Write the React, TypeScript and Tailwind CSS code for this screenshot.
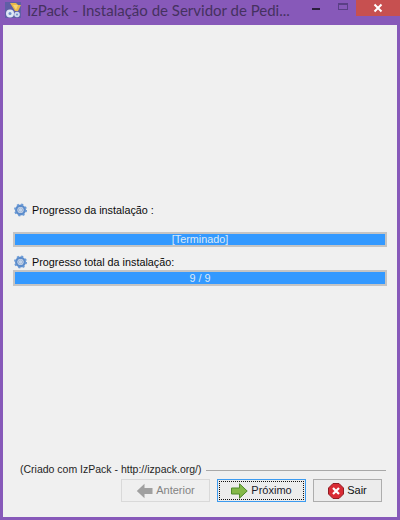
import React from 'react';

const Gear: React.FC = () => (
  <svg width="13" height="14" viewBox="0 0 14 14" className="shrink-0">
    <circle cx="7" cy="7" r="4.6" fill="none" stroke="#5c8ccb" strokeWidth="2.6" />
    <circle cx="7" cy="7" r="6.1" fill="none" stroke="#6a9ad6" strokeWidth="1.8" strokeDasharray="2.2 2.6" />
    <circle cx="7" cy="7" r="2.4" fill="#c3d4ea" stroke="#8aa6d0" strokeWidth="0.8" />
  </svg>
);

const AppIcon: React.FC = () => (
  <svg width="16" height="16" viewBox="0 0 16 16" className="shrink-0">
    <rect width="16" height="16" fill="#5f5ea6" />
    <path d="M5 1l6 0 2 2 3 0-3 6-3 0z" fill="#e8b84a" />
    <path d="M8 3l5 0-2 5z" fill="#f6d676" />
    <circle cx="5" cy="11.5" r="4" fill="#dfe8f5" />
    <circle cx="5" cy="11.5" r="1.5" fill="#6f8fc8" />
    <circle cx="12" cy="12.5" r="2.8" fill="#cfdcf0" />
    <circle cx="12" cy="12.5" r="1" fill="#6f8fc8" />
  </svg>
);

const ProgressBar: React.FC<{ label: string; h: string }> = ({ label, h }) => (
  <div className={`mx-[13px] ${h} border-2 border-[#c4c4c4] bg-[#3399ff] flex items-center justify-center text-[10.8px] text-[#dce9f7] leading-none`}>
    {label}
  </div>
);

const App: React.FC = () => {
  return (
    <div className="w-[400px] h-[520px] bg-[#8759b9] flex flex-col overflow-hidden font-['Liberation_Sans',sans-serif]">
      {/* Title bar */}
      <div className="h-[25px] flex items-start shrink-0">
        <div className="ml-[5px] mt-[2px]">
          <AppIcon />
        </div>
        <div className="ml-[6px] w-[279px] text-[15px] font-normal leading-[21px] text-[#453160] font-['Lato',sans-serif] whitespace-nowrap">
          IzPack - Instalação de Servidor de Pedi...
        </div>
        <div className="ml-[17px] mt-[8px] w-[8px] h-[2px] bg-[#2b1f3d]" />
        <div className="ml-[18px] mt-[3px] w-[10px] h-[7px] border border-[#5a3f86] border-t-2" />
        <div className="ml-[8px] w-[46px] h-[16px] bg-[#c75050] flex items-center justify-center">
          <svg width="10" height="10" viewBox="0 0 10 10">
            <path d="M1.5 1.5l7 7M8.5 1.5l-7 7" stroke="#fff" strokeWidth="2" />
          </svg>
        </div>
      </div>

      {/* Panel */}
      <div className="mx-[3px] mb-[3px] flex-1 bg-[#f0f0f0] flex flex-col text-[#0a0a0a]">
        <div className="h-[178px] shrink-0" />
        <div className="-mx-[3px] flex flex-col">
          <div className="ml-[14px] h-[14px] flex items-center gap-[5px]">
            <Gear />
            <span className="text-[10.8px] mt-[1px]">Progresso da instalação :</span>
          </div>
          <div className="h-[15px]" />
          <ProgressBar label="[Terminado]" h="h-[15px]" />
          <div className="ml-[14px] mt-[8px] h-[14px] flex items-center gap-[5px]">
            <Gear />
            <span className="text-[10.8px]">Progresso total da instalação:</span>
          </div>
          <div className="h-[1px]" />
          <ProgressBar label="9 / 9" h="h-[16px]" />
        </div>

        <div className="flex-1" />

        {/* Footer */}
        <div className="-mx-[3px] flex items-center h-[12px] pl-[20px] pr-[14px]">
          <span className="text-[10.5px] text-[#1f1f1f] whitespace-nowrap">(Criado com IzPack - http://izpack.org/)</span>
          <div className="ml-[5px] flex-1 h-[1px] bg-[#a8a8a8]" />
        </div>
        <div className="-mx-[3px] mt-[3px] mb-[15px] flex justify-end pr-[18px] gap-[7px]">
          <div className="w-[89px] h-[23px] border border-[#d9d9d9] bg-[#efefef] flex items-center justify-center gap-[3px] text-[#838383] text-[11px]">
            <svg width="17" height="16" viewBox="0 0 17 16" className="shrink-0">
              <path d="M16.5 5h-8V0.8L0.8 8l7.7 7.2V11h8z" fill="#a0a0a0" />
            </svg>
            Anterior
          </div>
          <div className="w-[89px] h-[23px] border border-[#3c9bf0] bg-[#ececec] p-[1px]">
            <div className="w-full h-full border border-dotted border-[#111] flex items-center justify-center gap-[3px] text-[#1a1a2a] text-[11px]">
              <svg width="17" height="16" viewBox="0 0 17 16" className="shrink-0">
                <path d="M0.5 5h8V0.8L16.2 8 8.5 15.2V11h-8z" fill="#84b848" stroke="#4f8a2a" />
              </svg>
              Próximo
            </div>
          </div>
          <div className="w-[69px] h-[23px] border border-[#adadad] bg-[#ececec] flex items-center justify-center gap-[3px] text-[#111] text-[11px]">
            <svg width="16" height="16" viewBox="0 0 16 16" className="shrink-0">
              <path d="M5 .5h6L15.5 5v6L11 15.5H5L.5 11V5z" fill="#d92b34" stroke="#8f1d24" />
              <path d="M5 5l6 6M11 5l-6 6" stroke="#fff" strokeWidth="2.2" />
            </svg>
            Sair
          </div>
        </div>
      </div>
    </div>
  );
};

export default App;
